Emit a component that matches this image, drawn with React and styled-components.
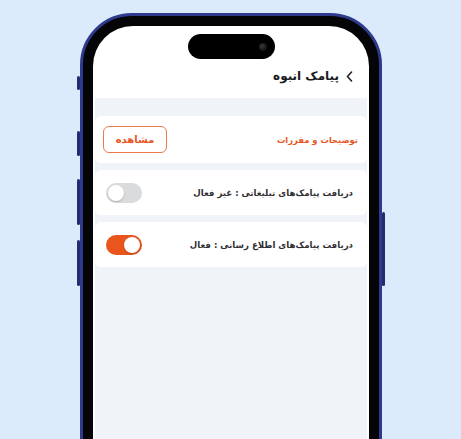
import React from "react";
import styled, { createGlobalStyle } from "styled-components";

const Global = createGlobalStyle`
  html, body { margin: 0; padding: 0; }
  body { background: #dcebfb; font-family: "DejaVu Sans", "Noto Sans", sans-serif; }
`;

const Stage = styled.div`
  width: 461px;
  height: 439px;
  overflow: hidden;
  background: #dcebfb;
`;

const Phone = styled.div`
  position: relative;
  box-sizing: border-box;
  margin: 13px 0 0 80px;
  width: 302px;
  height: 520px;
  border: 3px solid #2e3a8c;
  border-radius: 52px;
  background: #050507;
  padding: 10px;
`;

const SideButton = styled.div`
  position: absolute;
  width: 3px;
  top: ${(p) => p.$top}px;
  height: ${(p) => p.$h}px;
  ${(p) => (p.$right ? "right: -6px;" : "left: -6px;")}
  background: #232c6e;
  border-radius: 2px;
`;

const Screen = styled.div`
  box-sizing: border-box;
  height: 100%;
  background: #fff;
  border-radius: 40px;
  overflow: hidden;
  padding: 0 2px;
  display: flex;
  flex-direction: column;
`;

const StatusBar = styled.div`
  height: 33px;
  display: flex;
  justify-content: center;
  align-items: flex-start;
`;

const Island = styled.div`
  margin-top: 8px;
  width: 87px;
  height: 25px;
  border-radius: 13px;
  background: #000;
  display: flex;
  align-items: center;
  justify-content: flex-end;
  padding-right: 8px;
  box-sizing: border-box;
`;

const Camera = styled.div`
  width: 8px;
  height: 8px;
  border-radius: 50%;
  background: radial-gradient(circle at 40% 40%, #3a3a3a, #111 70%);
`;

const Header = styled.div`
  direction: rtl;
  height: 39px;
  display: flex;
  align-items: center;
  gap: 7px;
  padding: 0 14px 5px 0;
  box-sizing: border-box;
`;

const Title = styled.div`
  font-size: 12px;
  font-weight: 700;
  color: #1b1b1f;
`;

const Body = styled.div`
  flex: 1;
  background: #f0f4f8;
  padding-top: 18px;
  display: flex;
  flex-direction: column;
  gap: 7px;
`;

const Card = styled.div`
  direction: rtl;
  background: #fff;
  border-radius: 6px;
  height: ${(p) => p.$h}px;
  display: flex;
  align-items: center;
  justify-content: space-between;
  padding: 0 ${(p) => p.$pr}px 0 ${(p) => p.$pl}px;
`;

const Orange = styled.div`
  color: #e8561f;
  font-size: 8.4px;
  font-weight: 700;
`;

const Label = styled.div`
  color: #2f2f33;
  font-size: 8.6px;
  font-weight: 700;
`;

const OutlineButton = styled.button`
  width: 64px;
  height: 27px;
  border: 1px solid #ec7a4c;
  border-radius: 6px;
  background: #fff;
  color: #e8561f;
  font-family: "DejaVu Sans", sans-serif;
  font-size: 10px;
  font-weight: 600;
  padding: 0;
`;

const Track = styled.div`
  direction: ltr;
  width: 36px;
  height: 20px;
  border-radius: 10px;
  background: ${(p) => (p.$on ? "#e9551c" : "#dadbdd")};
  display: flex;
  align-items: center;
  justify-content: ${(p) => (p.$on ? "flex-end" : "flex-start")};
  padding: 0 2px;
  box-sizing: border-box;
`;

const Knob = styled.div`
  width: 16px;
  height: 16px;
  border-radius: 50%;
  background: #fff;
  box-shadow: 0 1px 2px rgba(0, 0, 0, 0.2);
`;

const Toggle = ({ on }) => (
  <Track $on={on}>
    <Knob />
  </Track>
);

export default function App() {
  return (
    <Stage>
      <Global />
      <Phone>
        <SideButton $top={60} $h={14} />
        <SideButton $top={115} $h={25} />
        <SideButton $top={163} $h={46} />
        <SideButton $top={224} $h={46} />
        <SideButton $right $top={196} $h={74} />
        <Screen>
          <StatusBar>
            <Island>
              <Camera />
            </Island>
          </StatusBar>
          <Header>
            <svg width="7" height="11" viewBox="0 0 7 11">
              <polyline
                points="5.5,1 1.5,5.5 5.5,10"
                fill="none"
                stroke="#222"
                strokeWidth="1.6"
                strokeLinecap="round"
                strokeLinejoin="round"
              />
            </svg>
            <Title>پیامک انبوه</Title>
          </Header>
          <Body>
            <Card $h={47} $pr={9} $pl={8}>
              <Orange>توضیحات و مقررات</Orange>
              <OutlineButton>مشاهده</OutlineButton>
            </Card>
            <Card $h={45} $pr={14} $pl={11}>
              <Label>دریافت پیامک‌های تبلیغاتی : غیر فعال</Label>
              <Toggle on={false} />
            </Card>
            <Card $h={45} $pr={14} $pl={11}>
              <Label>دریافت پیامک‌های اطلاع رسانی : فعال</Label>
              <Toggle on />
            </Card>
          </Body>
        </Screen>
      </Phone>
    </Stage>
  );
}
